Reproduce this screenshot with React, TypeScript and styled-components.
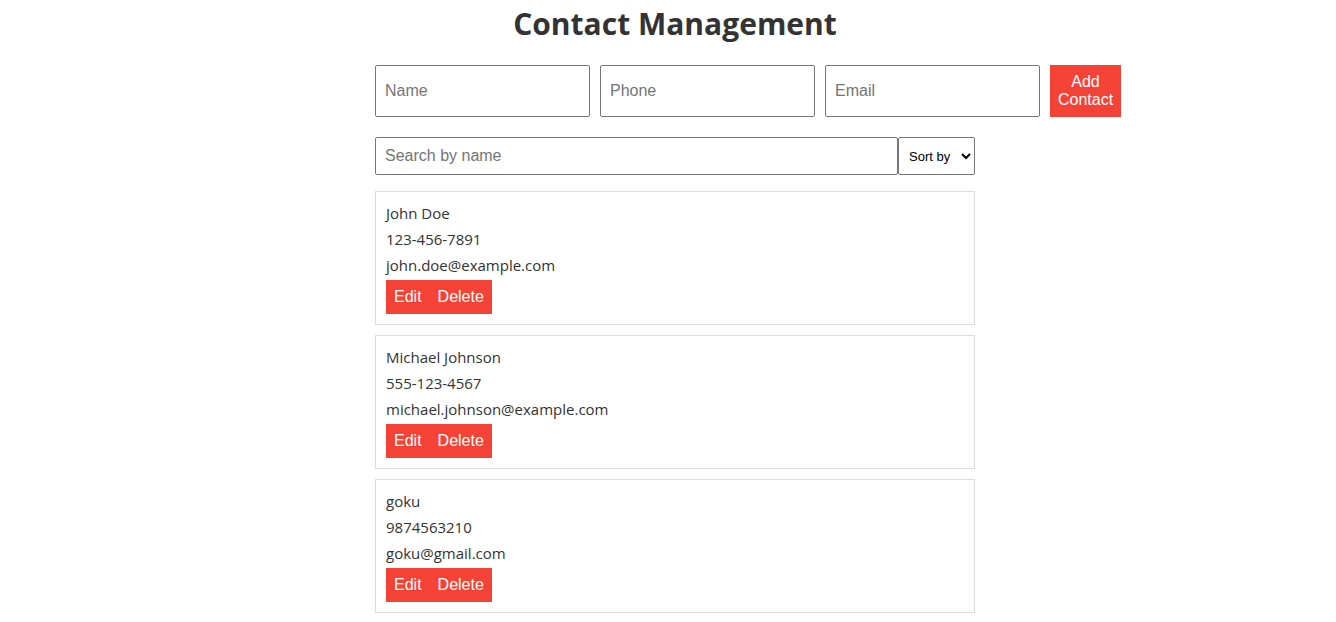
import styled, { createGlobalStyle } from "styled-components";

const GlobalStyle = createGlobalStyle`
  body {
    margin: 0;
    background: #fff;
    font-family: "Open Sans", "Noto Sans", sans-serif;
    color: #333;
  }
`;

interface Contact {
  name: string;
  phone: string;
  email: string;
}

const contacts: Contact[] = [
  { name: "John Doe", phone: "123-456-7891", email: "john.doe@example.com" },
  { name: "Michael Johnson", phone: "555-123-4567", email: "michael.johnson@example.com" },
  { name: "goku", phone: "9874563210", email: "goku@gmail.com" },
];

export default function App() {
  return (
    <>
      <GlobalStyle />
      <Page>
        <Container>
          <Title>Contact Management</Title>
          <Form>
            <Field placeholder="Name" />
            <Field placeholder="Phone" />
            <Field placeholder="Email" />
            <RedButton type="button" $wide>
              Add Contact
            </RedButton>
          </Form>
          <SearchRow>
            <Search placeholder="Search by name" />
            <SortSelect defaultValue="">
              <option value="">Sort by</option>
              <option value="name">Name</option>
              <option value="phone">Phone</option>
            </SortSelect>
          </SearchRow>
          <List>
            {contacts.map((c) => (
              <Card key={c.email}>
                <Line>{c.name}</Line>
                <Line>{c.phone}</Line>
                <Line>{c.email}</Line>
                <Actions>
                  <RedButton type="button">Edit</RedButton>
                  <RedButton type="button">Delete</RedButton>
                </Actions>
              </Card>
            ))}
          </List>
        </Container>
      </Page>
    </>
  );
}

const Page = styled.div`
  padding-left: 14px;
`;

const Container = styled.div`
  width: 600px;
  margin: 0 auto;
`;

const Title = styled.h1`
  margin: 0 0 20px;
  padding-top: 2px;
  text-align: center;
  font-size: 30px;
  line-height: 43px;
  font-weight: 700;
  color: #333;
`;

const Form = styled.div`
  display: flex;
  gap: 10px;
  width: 746px;
  margin-bottom: 20px;
`;

const Field = styled.input`
  box-sizing: border-box;
  width: 215px;
  height: 52px;
  padding: 0 9px;
  border: 1px solid #767676;
  border-radius: 2px;
  font-family: Arial, "Liberation Sans", sans-serif;
  font-size: 16px;
  color: #333;
  &::placeholder {
    color: #757575;
  }
`;

const RedButton = styled.button<{ $wide?: boolean }>`
  border: none;
  border-radius: 0;
  background: #f44336;
  color: #fff;
  font-family: Arial, "Liberation Sans", sans-serif;
  font-size: 16px;
  line-height: 18px;
  padding: 8px;
  cursor: pointer;
  width: ${(p) => (p.$wide ? "71px" : "auto")};
  height: ${(p) => (p.$wide ? "52px" : "34px")};
`;

const SearchRow = styled.div`
  display: flex;
  margin-bottom: 16px;
`;

const Search = styled.input`
  box-sizing: border-box;
  width: 523px;
  height: 38px;
  padding: 0 9px;
  border: 1px solid #767676;
  border-radius: 2px;
  font-family: Arial, "Liberation Sans", sans-serif;
  font-size: 16px;
  &::placeholder {
    color: #757575;
  }
`;

const SortSelect = styled.select`
  box-sizing: border-box;
  width: 77px;
  height: 38px;
  padding-left: 6px;
  border: 1px solid #767676;
  border-radius: 2px;
  background: #fff;
  font-family: Arial, "Liberation Sans", sans-serif;
  font-size: 13px;
  color: #000;
`;

const List = styled.div`
  display: flex;
  flex-direction: column;
  gap: 10px;
`;

const Card = styled.div`
  border: 1px solid #ddd;
  padding: 8px 10px 10px;
`;

const Line = styled.div`
  font-size: 15px;
  line-height: 26px;
`;

const Actions = styled.div`
  display: flex;
  margin-top: 2px;
`;
